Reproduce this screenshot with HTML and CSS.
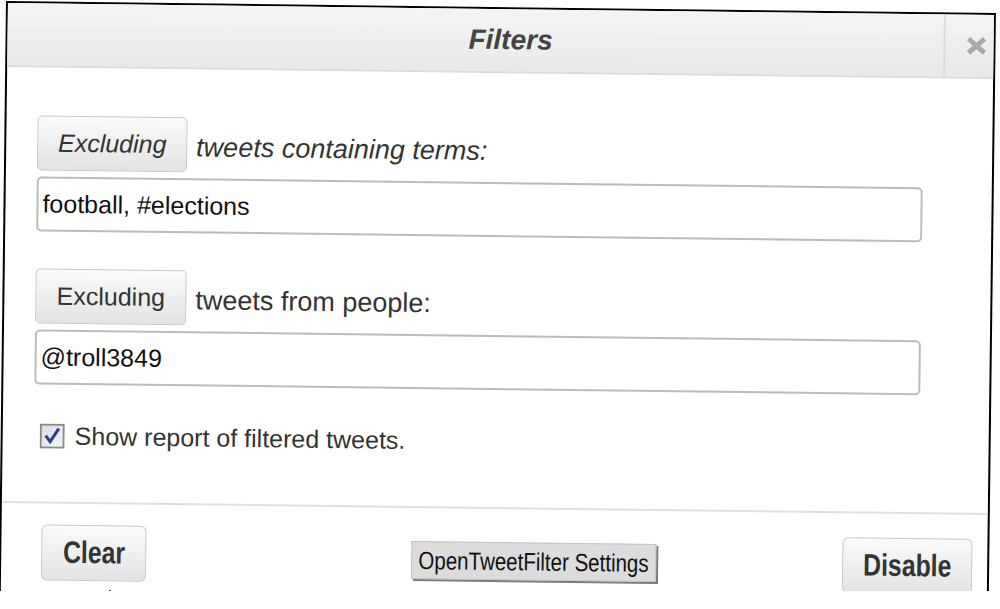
FILE: index.html
```html
<!DOCTYPE html>
<html>
    <head>
        <link rel="stylesheet" href="styles.css">
    </head>
    <body>
        <div class="dialog">
            <div class="titlebar">
                <div class="title">Filters</div>
                <div class="close">
                    <svg width="22" height="20" viewBox="0 0 22 20"><path d="M3 3 L19 17 M19 3 L3 17" stroke="#a9a9a9" stroke-width="5" fill="none"/></svg>
                </div>
            </div>
            <div class="content">
                <div class="row">
                    <button class="mode italic">Excluding</button>
                    <span class="label italic">tweets containing terms:</span>
                </div>
                <input class="field" type="text" value="football, #elections">
                <div class="row second">
                    <button class="mode wide">Excluding</button>
                    <span class="label">tweets from people:</span>
                </div>
                <input class="field" type="text" value="@troll3849">
                <label class="check">
                    <svg width="25" height="25" viewBox="0 0 25 25">
                        <defs>
                            <linearGradient id="box" x1="0" y1="0" x2="1" y2="1">
                                <stop offset="0" stop-color="#d9dde6"/>
                                <stop offset="1" stop-color="#f5f5f5"/>
                            </linearGradient>
                        </defs>
                        <rect x="1" y="1" width="23" height="23" fill="url(#box)" stroke="#8a8a8a" stroke-width="2"/>
                        <path d="M6 12 L10.5 18 L19 5" stroke="#2b3c8f" stroke-width="3" fill="none"/>
                    </svg>
                    <span>Show report of filtered tweets.</span>
                </label>
            </div>
            <div class="footer">
                <button class="action clear"><span class="narrow">Clear</span></button>
                <button class="settings"><span class="narrow">OpenTweetFilter Settings</span></button>
                <button class="action disable"><span class="narrow">Disable</span></button>
            </div>
        </div>
    </body>
</html>
```

FILE: styles.css
```css
body{
  margin: 0;
  background-color: #fff;
  font-family: "Liberation Sans", Arial, sans-serif;
  overflow: hidden;
}
.dialog{
  position: relative;
  width: 990px;
  height: 590px;
  box-sizing: border-box;
  margin: 1px 0 0 6px;
  border: 2px solid #000;
  border-bottom: none;
  display: flex;
  flex-direction: column;
  transform: rotate(0.7deg);
  transform-origin: 0 0;
}
.dialog::after{
  content: "";
  position: absolute;
  left: 0;
  right: 0;
  bottom: 0;
  height: 2px;
  background: repeating-linear-gradient(to right, transparent 0 108px, #000 108px 110px);
}
.titlebar{
  display: flex;
  height: 62px;
  background: linear-gradient(#f4f4f4, #e9e9e9);
  border-bottom: 2px solid #dcdcdc;
}
.title{
  flex: 1;
  display: flex;
  align-items: center;
  justify-content: center;
  padding-left: 70px;
  font-size: 28px;
  font-weight: bold;
  font-style: italic;
  color: #444;
}
.close{
  width: 50px;
  box-sizing: border-box;
  border-left: 2px solid #dcdcdc;
  display: flex;
  align-items: center;
  padding-left: 20px;
}
.content{
  display: flex;
  flex-direction: column;
  align-items: flex-start;
  padding: 48px 0 51px 31px;
}
.row{
  display: flex;
  align-items: center;
  gap: 9px;
}
.row.second{
  margin-top: 37px;
}
.mode{
  width: 150px;
  height: 55px;
  padding: 0;
  font-family: "Liberation Sans", Arial, sans-serif;
  font-size: 25px;
  color: #333;
  border: 1px solid #c8c8c8;
  border-radius: 5px;
  background: linear-gradient(#fbfbfb, #e3e3e3);
}
.mode.wide{
  width: 151px;
}
.italic{
  font-style: italic;
}
.label{
  margin-top: 5px;
  font-size: 27px;
  color: #333;
}
.field{
  width: 886px;
  height: 55px;
  box-sizing: border-box;
  margin: 6px 0 0;
  padding: 0 4px;
  border: 2px solid #bbb;
  border-radius: 5px;
  font-family: "Liberation Sans", Arial, sans-serif;
  font-size: 25px;
  color: #111;
  outline: none;
}
.check{
  margin: 37px 0 0 6px;
  display: flex;
  align-items: center;
  gap: 10px;
  font-size: 25px;
  color: #333;
}
.check svg{
  display: block;
}
.footer{
  flex: 1;
  display: flex;
  align-items: flex-start;
  border-top: 2px solid #e0e0e0;
  padding: 21px 15px 0 40px;
}
.narrow{
  flex-shrink: 0;
  white-space: nowrap;
  transform: scaleX(0.8);
}
.action,
.settings{
  display: flex;
  align-items: center;
  justify-content: center;
  padding: 0;
  font-family: "Liberation Sans", Arial, sans-serif;
}
.action{
  height: 56px;
  font-size: 31px;
  font-weight: bold;
  color: #333;
  border: 1px solid #c8c8c8;
  border-radius: 6px;
  background: linear-gradient(#fbfbfb, #e3e3e3);
}
.clear{
  width: 105px;
}
.disable{
  width: 130px;
  margin: 3px 0 0 auto;
}
.settings{
  width: 245px;
  height: 38px;
  margin: 12px 0 0 265px;
  font-size: 25px;
  color: #111;
  background-color: #dcdcdc;
  border: 1px solid #c4c4c4;
  border-radius: 0;
  box-shadow: 2px 2px 0 #7a7a7a;
}
.settings .narrow{
  transform: scaleX(0.82);
}
```
